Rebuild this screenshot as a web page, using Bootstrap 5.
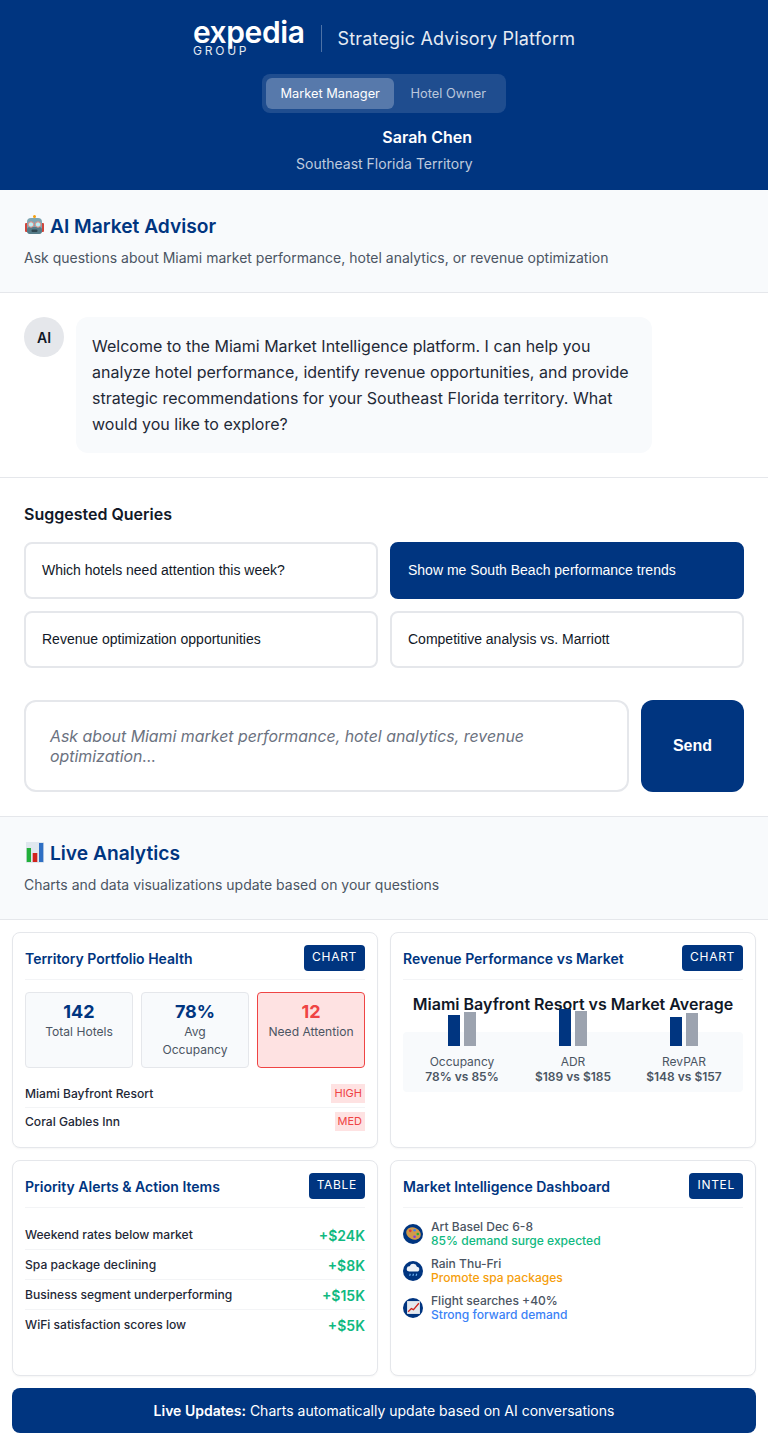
<!DOCTYPE html>
<html lang="en">
<head>
  <meta charset="UTF-8">
  <meta name="viewport" content="width=device-width, initial-scale=1">
  <title>Strategic Advisory Platform</title>
  <link href="https://cdn.jsdelivr.net/npm/bootstrap@5.3.0/dist/css/bootstrap.min.css" rel="stylesheet">
  <style>
    body { font-family: Inter, "Liberation Sans", sans-serif; color: #111827; background: #fff; }
    .top-head { background: #003580; height: 190px; padding-top: 16px; color: #fff; }
    .brand-box { margin-bottom: 3px; }
    .brand-name { font-size: 30px; font-weight: 600; line-height: 32px; letter-spacing: -0.4px; }
    .brand-sub { font-size: 12px; line-height: 12px; letter-spacing: 2.8px; margin-top: -3px; color: #e3e9f2; }
    .brand-rule { width: 1px; height: 27px; background: rgba(255,255,255,.3); }
    .brand-title { font-size: 18px; font-weight: 400; color: #e6ebf3; letter-spacing: .17px; }
    .role-switch { background: rgba(255,255,255,.12); border-radius: 8px; padding: 4px; width: 244px; margin: 14px auto 0; }
    .role-btn { font-size: 12.8px; padding: 0 16px; height: 31px; line-height: 31px; border-radius: 6px; color: rgba(255,255,255,.7); white-space: nowrap; }
    .role-btn.is-on { background: rgba(255,255,255,.25); color: #fff; width: 129px; text-align: center; padding: 0; }
    .user-box { width: 176px; margin: 12px auto 0; text-align: right; }
    .user-name { font-size: 16px; font-weight: 600; line-height: 24px; }
    .user-area { font-size: 14px; line-height: 21px; color: rgba(255,255,255,.75); margin-top: 4px; white-space: nowrap; }
    .band-head { background: #f8fafc; border-bottom: 1px solid #e5e7eb; height: 103px; padding: 24px 24px 0; }
    .band-title { font-size: 19.2px; font-weight: 600; color: #003580; line-height: 24px; margin: 0 0 8px; display: flex; align-items: center; gap: 4px; }
    .band-note { font-size: 14px; color: #4b5563; line-height: 21px; margin: 0; padding-top: 1px; }
    .chat-zone { height: 185px; padding: 24px; border-bottom: 1px solid #e5e7eb; display: flex; gap: 12px; }
    .ai-dot { width: 40px; height: 40px; border-radius: 50%; background: #e5e7eb; font-size: 14px; font-weight: 600; flex: none; }
    .ai-bubble { width: 576px; height: 136px; background: #f8fafc; border-radius: 12px; padding: 16px; font-size: 16px; line-height: 26px; color: #1f2937; }
    .query-zone { height: 339px; padding: 24px; border-bottom: 1px solid #e5e7eb; }
    .query-head { font-size: 16px; font-weight: 600; line-height: 24px; margin: 0 0 16px; color: #111827; }
    .query-grid { display: grid; grid-template-columns: 1fr 1fr; gap: 12px; }
    .query-btn { font-family: "Liberation Sans", Arial, sans-serif; font-size: 14px; text-align: left; background: #fff; border: 2px solid #e5e7eb; border-radius: 8px; height: 57px; padding: 0 16px; color: #111827; }
    .query-btn.is-on { background: #003580; border-color: #003580; color: #fff; }
    .ask-row { display: flex; gap: 12px; margin-top: 32px; }
    .ask-box { width: 605px; height: 92px; border: 2px solid #e5e7eb; border-radius: 12px; font-family: Inter, sans-serif; font-size: 15.9px; line-height: 20px; padding: 25px 24px 23px; resize: none; outline: 0; }
    .ask-box::placeholder { font-style: italic; color: #6b7280; opacity: 1; }
    .ask-send { width: 103px; height: 92px; border: 0; border-radius: 12px; background: #003580; color: #fff; font-family: "Liberation Sans", Arial, sans-serif; font-size: 16px; font-weight: 700; }
    .panel-grid { display: grid; grid-template-columns: 1fr 1fr; gap: 12px; padding: 12px; }
    .panel { background: #fff; border: 1px solid #e5e7eb; border-radius: 8px; padding: 12px; height: 216px; box-shadow: 0 1px 2px rgba(0,0,0,.04); }
    .panel-head { display: flex; justify-content: space-between; align-items: flex-start; height: 35px; margin-bottom: 12px; border-bottom: 1px solid #f3f4f6; }
    .panel-title { font-size: 14px; font-weight: 600; color: #003580; line-height: 26px; padding-top: 1px; }
    .panel-tag { background: #003580; color: #fff; font-size: 12px; font-weight: 400; letter-spacing: .7px; line-height: 14px; padding: 5px 8px 7px; border-radius: 4px; }
    .stat-grid { display: grid; grid-template-columns: repeat(3, 1fr); gap: 8px; margin-bottom: 12px; }
    .stat-box { background: #f8fafc; border: 1px solid #e5e7eb; border-radius: 4px; height: 76px; padding: 8px 10px; text-align: center; }
    .stat-box.is-bad { background: #fee2e2; border-color: #ef4444; }
    .stat-num { font-size: 18px; font-weight: 700; line-height: 22px; color: #003580; }
    .is-bad .stat-num { color: #ef4444; }
    .stat-label { font-size: 12.1px; line-height: 18px; color: #4b5563; }
    .list-line { display: flex; justify-content: space-between; align-items: center; font-size: 12.1px; font-weight: 500; line-height: 19px; padding: 4px 0; border-bottom: 1px solid #f3f4f6; color: #1f2937; }
    .list-line:last-child { border-bottom: 0; }
    .risk-tag { background: #fee2e2; color: #ef4444; font-size: 11px; font-weight: 400; line-height: 19px; padding: 0 3px; }
    .chart-title { font-size: 16px; font-weight: 600; line-height: 20px; text-align: center; white-space: nowrap; padding-top: 2px; height: 40px; color: #111827; }
    .chart-zone { background: #f8fafc; border-radius: 4px; height: 60px; display: grid; grid-template-columns: repeat(3, 111px); grid-template-rows: 52px; justify-content: center; align-items: end; padding-bottom: 8px; }
    .chart-col { text-align: center; font-size: 12px; line-height: 15px; color: #4b5563; white-space: nowrap; }
    .bar-pair { display: flex; justify-content: center; align-items: flex-end; gap: 4px; margin-bottom: 8px; }
    .bar-a, .bar-b { width: 12px; }
    .bar-a { background: #003580; }
    .bar-b { background: #9ca3af; }
    .chart-col b { font-weight: 600; }
    .alert-line { display: flex; justify-content: space-between; align-items: center; height: 30px; padding-top: 1px; font-size: 12.1px; font-weight: 500; border-bottom: 1px solid #f3f4f6; color: #1f2937; }
    .alert-line:last-child { border-bottom: 0; }
    .alert-val { font-size: 14px; font-weight: 600; color: #10b981; }
    .intel-list { margin-top: -1px; }
    .intel-line { display: flex; align-items: center; gap: 8px; height: 29px; margin-bottom: 8px; font-size: 12.05px; font-weight: 500; line-height: 14px; color: #4b5563; }
    .intel-dot { width: 20px; height: 20px; border-radius: 50%; background: #003580; flex: none; display: flex; align-items: center; justify-content: center; }
    .tone-green { color: #10b981; }
    .tone-amber { color: #f59e0b; }
    .tone-blue { color: #3b82f6; }
    .foot-bar { margin: 0 12px; height: 45px; border-radius: 8px; background: #003580; color: #fff; font-size: 14px; line-height: 45px; text-align: center; }
    .foot-bar b { font-weight: 600; }
  </style>
</head>
<body>

<header class="top-head">
  <div class="d-flex justify-content-center align-items-center gap-3">
    <div class="brand-box">
      <div class="brand-name">expedia</div>
      <div class="brand-sub">GROUP</div>
    </div>
    <div class="brand-rule"></div>
    <div class="brand-title">Strategic Advisory Platform</div>
  </div>
  <div class="role-switch d-flex">
    <div class="role-btn is-on">Market Manager</div>
    <div class="role-btn">Hotel Owner</div>
  </div>
  <div class="user-box">
    <div class="user-name">Sarah Chen</div>
    <div class="user-area">Southeast Florida Territory</div>
  </div>
</header>

<section class="band-head">
  <h2 class="band-title">
    <svg width="22" height="22" viewBox="0 0 22 22"><circle cx="10.5" cy="1.5" r="1.5" fill="#f59e0b"/><rect x="1" y="8" width="3" height="9" rx="1" fill="#d0453c"/><rect x="17" y="8" width="3" height="9" rx="1" fill="#d0453c"/><rect x="3" y="3" width="15" height="16" rx="4" fill="#7ea6b2"/><rect x="3" y="12" width="15" height="7" rx="3" fill="#557b88"/><circle cx="7" cy="9.5" r="2.7" fill="#b9f0f5" stroke="#e88a80"/><circle cx="14" cy="9.5" r="2.7" fill="#b9f0f5" stroke="#e88a80"/><rect x="7.5" y="14.5" width="6" height="2.5" rx="1" fill="#2f4650"/></svg>
    AI Market Advisor
  </h2>
  <p class="band-note">Ask questions about Miami market performance, hotel analytics, or revenue optimization</p>
</section>

<section class="chat-zone">
  <div class="ai-dot d-flex align-items-center justify-content-center">AI</div>
  <div class="ai-bubble">Welcome to the Miami Market Intelligence platform. I can help you analyze hotel performance, identify revenue opportunities, and provide strategic recommendations for your Southeast Florida territory. What would you like to explore?</div>
</section>

<section class="query-zone">
  <h3 class="query-head">Suggested Queries</h3>
  <div class="query-grid">
    <button class="query-btn" type="button">Which hotels need attention this week?</button>
    <button class="query-btn is-on" type="button">Show me South Beach performance trends</button>
    <button class="query-btn" type="button">Revenue optimization opportunities</button>
    <button class="query-btn" type="button">Competitive analysis vs. Marriott</button>
  </div>
  <div class="ask-row">
    <textarea class="ask-box" placeholder="Ask about Miami market performance, hotel analytics, revenue optimization..."></textarea>
    <button class="ask-send" type="button">Send</button>
  </div>
</section>

<section class="band-head">
  <h2 class="band-title">
    <svg width="22" height="22" viewBox="0 0 22 22"><rect x="2" y="0" width="18" height="21" fill="#dfe7ee"/><rect x="2.7" y="6" width="4.3" height="14" fill="#22b03a"/><rect x="8.7" y="11" width="4.6" height="9" fill="#d0231c"/><rect x="15" y="1" width="4.3" height="19" fill="#2f6fc4"/></svg>
    Live Analytics
  </h2>
  <p class="band-note">Charts and data visualizations update based on your questions</p>
</section>

<section class="panel-grid">
  <div class="panel">
    <div class="panel-head"><div class="panel-title">Territory Portfolio Health</div><span class="panel-tag">CHART</span></div>
    <div class="stat-grid">
      <div class="stat-box"><div class="stat-num">142</div><div class="stat-label">Total Hotels</div></div>
      <div class="stat-box"><div class="stat-num">78%</div><div class="stat-label">Avg Occupancy</div></div>
      <div class="stat-box is-bad"><div class="stat-num">12</div><div class="stat-label">Need Attention</div></div>
    </div>
    <div class="list-line"><span>Miami Bayfront Resort</span><span class="risk-tag">HIGH</span></div>
    <div class="list-line"><span>Coral Gables Inn</span><span class="risk-tag">MED</span></div>
  </div>

  <div class="panel">
    <div class="panel-head"><div class="panel-title">Revenue Performance vs Market</div><span class="panel-tag">CHART</span></div>
    <div class="chart-title">Miami Bayfront Resort vs Market Average</div>
    <div class="chart-zone">
      <div class="chart-col">
        <div class="bar-pair"><div class="bar-a" style="height:31px"></div><div class="bar-b" style="height:34px"></div></div>
        Occupancy<br><b>78% vs 85%</b>
      </div>
      <div class="chart-col">
        <div class="bar-pair"><div class="bar-a" style="height:37px"></div><div class="bar-b" style="height:35px"></div></div>
        ADR<br><b>$189 vs $185</b>
      </div>
      <div class="chart-col">
        <div class="bar-pair"><div class="bar-a" style="height:29px"></div><div class="bar-b" style="height:33px"></div></div>
        RevPAR<br><b>$148 vs $157</b>
      </div>
    </div>
  </div>

  <div class="panel">
    <div class="panel-head"><div class="panel-title">Priority Alerts &amp; Action Items</div><span class="panel-tag">TABLE</span></div>
    <div class="alert-line"><span>Weekend rates below market</span><span class="alert-val">+$24K</span></div>
    <div class="alert-line"><span>Spa package declining</span><span class="alert-val">+$8K</span></div>
    <div class="alert-line"><span>Business segment underperforming</span><span class="alert-val">+$15K</span></div>
    <div class="alert-line"><span>WiFi satisfaction scores low</span><span class="alert-val">+$5K</span></div>
  </div>

  <div class="panel">
    <div class="panel-head"><div class="panel-title">Market Intelligence Dashboard</div><span class="panel-tag">INTEL</span></div>
    <div class="intel-list">
      <div class="intel-line">
        <div class="intel-dot"><svg width="15" height="15" viewBox="0 0 14 14"><ellipse cx="7" cy="7" rx="7" ry="5.5" fill="#d19a4a" transform="rotate(25 7 7)"/><circle cx="4" cy="4.5" r="1.3" fill="#e23b3b"/><circle cx="8" cy="4" r="1.2" fill="#3b82f6"/><circle cx="11" cy="7.5" r="1.2" fill="#22b03a"/><circle cx="8" cy="10" r="1.2" fill="#7c3aed"/></svg></div>
        <div>Art Basel Dec 6-8<br><span class="tone-green">85% demand surge expected</span></div>
      </div>
      <div class="intel-line">
        <div class="intel-dot"><svg width="15" height="15" viewBox="0 0 14 14"><path d="M3 8a2.5 2.5 0 0 1 .4-5 3.6 3.6 0 0 1 6.8.4A2.4 2.4 0 0 1 11 8z" fill="#eef2f6"/><path d="M4 10l-.6 2M7 10l-.6 2M10 10l-.6 2" stroke="#6db3f2" stroke-width="1.1"/></svg></div>
        <div>Rain Thu-Fri<br><span class="tone-amber">Promote spa packages</span></div>
      </div>
      <div class="intel-line">
        <div class="intel-dot"><svg width="15" height="15" viewBox="0 0 14 14"><rect x="1" y="1" width="12" height="12" fill="#e5e9ee"/><path d="M2 11l3-3 2 1 5-6" fill="none" stroke="#d0231c" stroke-width="1.2"/></svg></div>
        <div>Flight searches +40%<br><span class="tone-blue">Strong forward demand</span></div>
      </div>
    </div>
  </div>
</section>

<div class="foot-bar"><b>Live Updates:</b> Charts automatically update based on AI conversations</div>

<script src="https://cdn.jsdelivr.net/npm/bootstrap@5.3.0/dist/js/bootstrap.bundle.min.js"></script>
</body>
</html>
